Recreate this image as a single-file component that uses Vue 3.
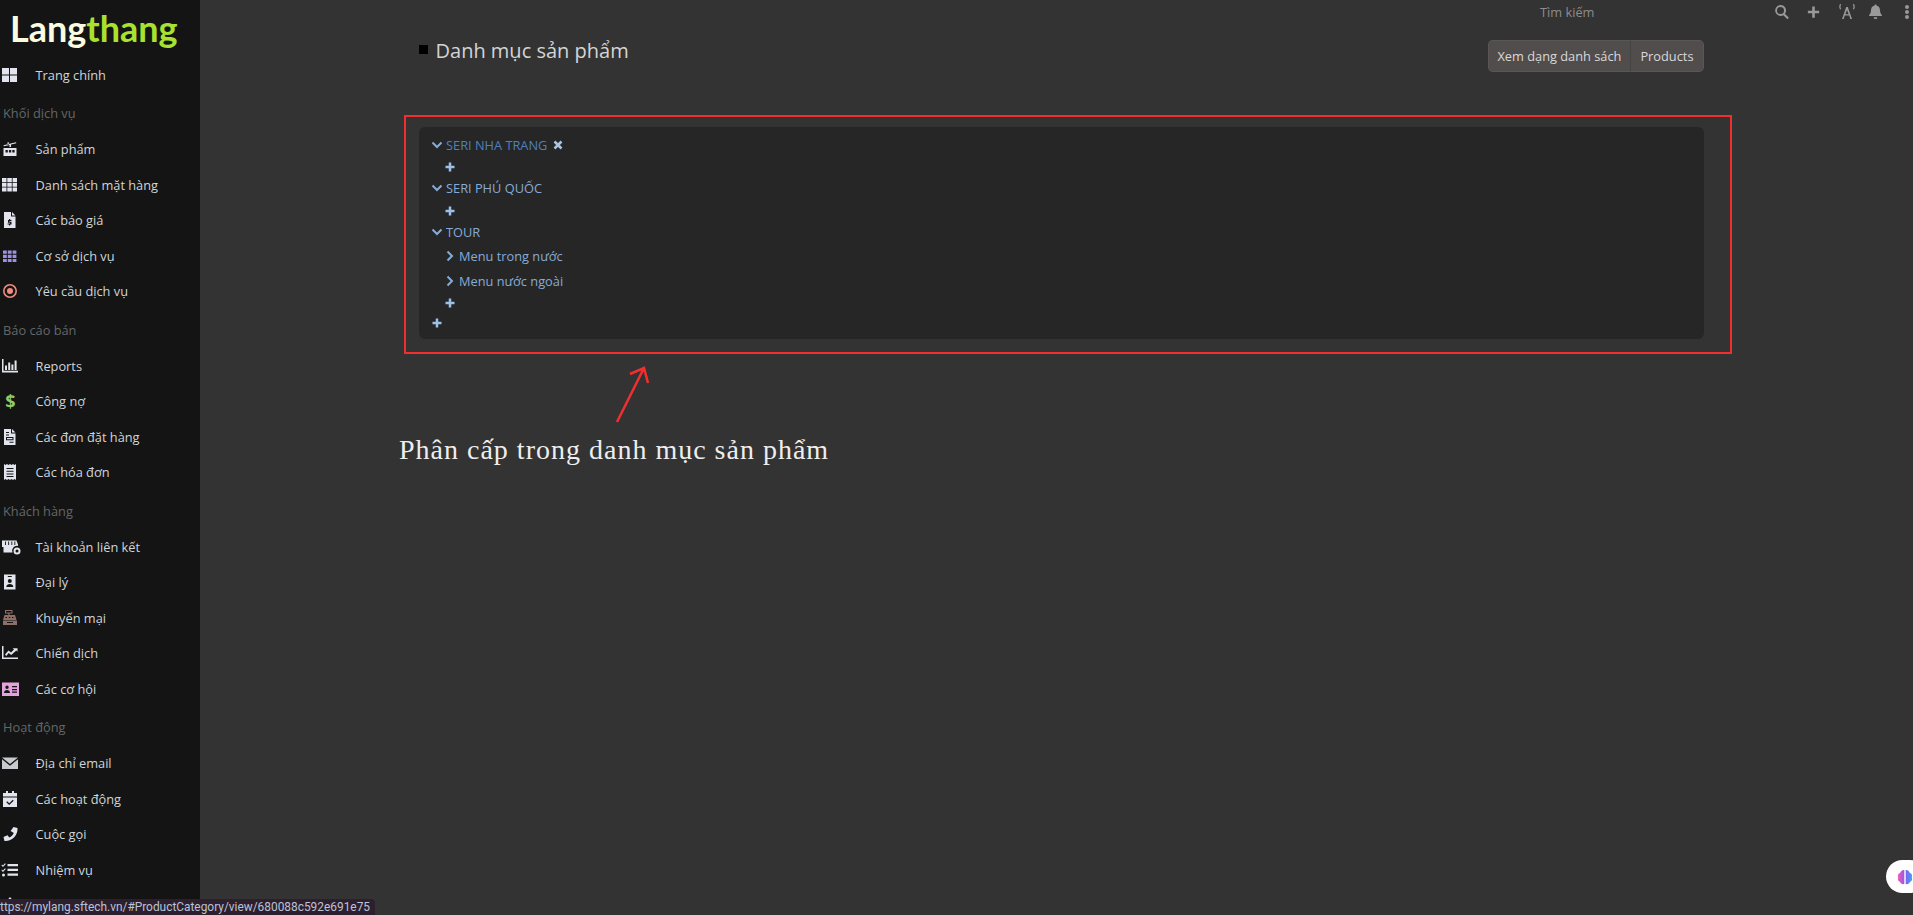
<script setup>
const icons = {
  home: 'M0 1h7v6.500H0zM8 1h7v6.500H8zM0 8.500h7V15H0zM8 8.500h7V15H8z',
  cable: 'M1.500 7h13v8h-13zM3.500 9v2.500h2.300V9zM6.900 9v2.500h2.300V9zM10.300 9v2.500h2.300V9zM1.500 4.200l12.500-3 .3 1-5.300 1.300V6H7.500V3.900L1.800 5.200zM5.500 1.200h1.300v2.500H5.500z',
  grid: 'M0 1h4.500v4H0zM5.300 1h4.500v4H5.300zM10.600 1H15v4h-4.400zM0 5.800h4.500v4H0zM5.300 5.800h4.500v4H5.300zM10.600 5.800H15v4h-4.400zM0 10.600h4.500v4H0zM5.300 10.600h4.500v4H5.300zM10.600 10.600H15v4h-4.400z',
  quote: 'M2 0h7v4.500h4.500V16H2zM10 0l3.500 3.500H10zM7 7h1.200v1H9.500v1H7.500v.8h2V12.500H8.200v1H7v-1H5.500v-1h2.500v-.8H6V8h1z',
  small: 'M1 2.500h3.800v3.200H1zM5.800 2.500h3.800v3.200H5.800zM10.600 2.500h3.800v3.200h-3.800zM1 6.700h3.800v3.200H1zM5.800 6.700h3.800v3.200H5.800zM10.600 6.700h3.800v3.200h-3.800zM1 10.900h3.800v3.200H1zM5.800 10.900h3.800v3.200H5.800zM10.600 10.900h3.800v3.200h-3.800z',
  target: 'M8 1a7 7 0 1 1 0 14A7 7 0 0 1 8 1zM8 2.600a5.400 5.400 0 1 0 0 10.800A5.400 5.400 0 0 0 8 2.600zM8 5a3 3 0 1 1 0 6 3 3 0 0 1 0-6z',
  bars: 'M0 1h1.500v11.700H16v1.800H0zM3 7.500h2v4.500H3zM6.200 4.500h2V12h-2zM9.400 6.500h2V12h-2zM12.600 2.500h2V12h-2z',
  order: 'M2 0h7v4.500h4.500V16H2zM10 0l3.500 3.500H10zM4 3h3v1H4zM4 5.500h3v1H4zM4 8h7.500v3.200H4zM5 9v1.200h5.500V9zM7.500 12.700h4v1h-4z',
  receipt: 'M2 0l1.500 1L5 0l1.500 1L8 0l1.500 1L11 0l1.500 1L14 0v16l-1.500-1-1.500 1-1.500-1L8 16l-1.500-1L5 16l-1.500-1L2 16zM4.500 4v1h7V4zM4.500 6.700v1h7v-1zM4.500 9.400v1h7v-1zM4.500 12v1h7v-1z',
  store: 'M0 1.500h14.500l1.500 4v1.500a4.800 4.800 0 0 0-5.500 6.500H1.500V8H0zM3 2.500v3.500h.9V2.500zM6.200 2.500v3.500h.9V2.500zM9.400 2.500v3.500h.9V2.500zM12.400 2.500v3.500h.9V2.500zM15 8.500a3.500 3.500 0 1 1 0 7 3.500 3.500 0 0 1 0-7zM15 10.500a1.500 1.500 0 1 0 0 3 1.500 1.500 0 0 0 0-3z',
  badge: 'M2 .5h11.500v15H2zM5.800 2v1h4V2zM7.800 5a2 2 0 1 1 0 4 2 2 0 0 1 0-4zM4.300 13c0-2 1.500-3 3.500-3s3.500 1 3.500 3z',
  register: 'M3 0h7.500v3.500H3zM4 1v1.500h5.500V1zM6.300 3.500h1.200V5H6.300zM2.500 5h10.500l1.500 5h-13.500zM1 10.500h14V15H1zM3.500 7v1h1.500V7zM6.800 7v1h1.500V7zM10 7v1h1.500V7zM5 12v1h6v-1z',
  line: 'M0 1h1.500v11.500H16V14H0zM3 9.500l3.500-4 2.500 2 3-3-1.300-1.300H15.500v3.500L14.300 5.500 9.200 10 6.700 8l-2.500 3z',
  card: 'M0 1.500h17V15H0zM5 4.500a1.700 1.700 0 1 0 0 3.400 1.700 1.700 0 0 0 0-3.400zM2 12c0-2 1.300-3 3-3s3 1 3 3zM10 5v1.200h5V5zM10 8v1.200h5V8zM10 10.500v1.200h5v-1.200z',
  mail: 'M0 2.500h16L8 9zM0 4.300l8 6.400 8-6.400V14H0z',
  calendar: 'M4 0h2v2h4V0h2v2h3v3.500H1V2h3zM1 6.500h14V16H1zM10.800 8.800L7.200 12.300 5.200 10.300l-.9.9 2.900 2.900 4.500-4.400z',
  phone: 'M11.500 1l4 1c.5 7.500-5.500 13.500-13 13l-1-4 4-1.800 1.800 2.200c2-1 3.500-2.500 4.500-4.500L8.600 5z',
  tasks: 'M0 2.500l1 1 2-2.200.8.8L1 5-.5 3.500zM5.500 2H16v2.200H5.500zM0 7.500l1 1 2-2.200.8.8L1 10-.5 8.500zM5.500 6.700H16v2.200H5.500zM1.500 11.500a1.500 1.500 0 1 1 0 3 1.500 1.500 0 0 1 0-3zM5.500 11.500H16v2.200H5.500z',
  up: 'M8 0l5 6H3z'
}

const nav = [
  { label: 'Trang chính', icon: 'home' },
  { group: 'Khối dịch vụ' },
  { label: 'Sản phẩm', icon: 'cable' },
  { label: 'Danh sách mặt hàng', icon: 'grid' },
  { label: 'Các báo giá', icon: 'quote' },
  { label: 'Cơ sở dịch vụ', icon: 'small', tone: 'purple' },
  { label: 'Yêu cầu dịch vụ', icon: 'target', tone: 'coral' },
  { group: 'Báo cáo bán' },
  { label: 'Reports', icon: 'bars' },
  { label: 'Công nợ', glyph: '$' },
  { label: 'Các đơn đặt hàng', icon: 'order' },
  { label: 'Các hóa đơn', icon: 'receipt' },
  { group: 'Khách hàng' },
  { label: 'Tài khoản liên kết', icon: 'store' },
  { label: 'Đại lý', icon: 'badge' },
  { label: 'Khuyến mại', icon: 'register', tone: 'brown' },
  { label: 'Chiến dịch', icon: 'line' },
  { label: 'Các cơ hội', icon: 'card', tone: 'pink' },
  { group: 'Hoạt động' },
  { label: 'Địa chỉ email', icon: 'mail', tone: 'grey' },
  { label: 'Các hoạt động', icon: 'calendar' },
  { label: 'Cuộc gọi', icon: 'phone' },
  { label: 'Nhiệm vụ', icon: 'tasks' },
  { label: '', icon: 'up' }
]
</script>

<template>
  <div class="page">
    <aside class="sidebar">
      <div class="logo"><span class="logo-a">Lang</span><span class="logo-b">thang</span></div>
      <nav class="nav">
        <template v-for="(item, i) in nav" :key="i">
          <div v-if="item.group" class="group">{{ item.group }}</div>
          <a v-else class="row">
            <span class="glyph" v-if="item.glyph">{{ item.glyph }}</span>
            <svg v-else class="ico" :class="item.tone" viewBox="0 0 17 16"><path fill-rule="evenodd" :d="icons[item.icon]" /></svg>
            <span>{{ item.label }}</span>
          </a>
        </template>
      </nav>
    </aside>

    <main class="main">
      <header class="top">
        <span class="search">Tìm kiếm</span>
        <div class="top-icons">
          <svg class="t-search" viewBox="0 0 16 16" width="16" height="16"><path fill-rule="evenodd" d="M6.500 1a5.500 5.500 0 0 1 4.400 8.800l4 4-1.500 1.500-4-4A5.500 5.500 0 1 1 6.500 1zM6.500 3a3.500 3.500 0 1 0 0 7 3.500 3.500 0 0 0 0-7z" /></svg>
          <svg class="t-plus" viewBox="0 0 16 16" width="15" height="16"><path d="M6.600 2h2.800v4.600H14v2.800H9.400V14H6.600V9.400H2V6.600h4.600z" /></svg>
          <svg class="t-ant" viewBox="0 0 20 16" width="20" height="16"><path fill-rule="evenodd" d="M9.200 3h1.600L15 15h-1.700l-1.100-3.400H7.800L6.700 15H5zM10 6l-1.600 4.200h3.200zM3 0l1.200.3c-.9 1.400-.9 3.400 0 4.800L3 5.400C2 3.800 2 1.600 3 0zM17 0c1 1.600 1 3.800 0 5.400l-1.200-.3c.9-1.400.9-3.400 0-4.800z" /></svg>
          <svg class="t-bell" viewBox="0 0 16 16" width="15" height="16"><path d="M8 0a1.300 1.300 0 0 1 1.300 1.300c2.300.5 3.500 2.400 3.500 4.800 0 3.200 1.500 4.400 2 5.200v1H1.200v-1c.5-.8 2-2 2-5.200 0-2.400 1.200-4.300 3.500-4.800A1.300 1.300 0 0 1 8 0zM6 13.500h4a2 2 0 0 1-4 0z" /></svg>
          <svg class="t-dots" viewBox="0 0 6 16" width="6" height="16"><path d="M3 1a2 2 0 1 1 0 4 2 2 0 0 1 0-4zM3 6a2 2 0 1 1 0 4 2 2 0 0 1 0-4zM3 11a2 2 0 1 1 0 4 2 2 0 0 1 0-4z" /></svg>
        </div>
      </header>

      <section class="content">
        <div class="head">
          <div class="title"><i class="bullet"></i><h1>Danh mục sản phẩm</h1></div>
          <div class="btns">
            <button class="btn">Xem dạng danh sách</button>
            <button class="btn">Products</button>
          </div>
        </div>

        <div class="tree">
          <div class="cat"><svg class="chev" viewBox="0 0 12 12"><path d="M1.500 3.500L6 8l4.500-4.500" /></svg><span class="active">SERI NHA TRANG</span><svg class="close" viewBox="0 0 12 12"><path d="M2.500 2.500l7 7M9.500 2.500l-7 7" /></svg></div>
          <div class="add nested"><svg class="plus" viewBox="0 0 12 12"><path d="M6 1.500v9M1.500 6h9" /></svg></div>
          <div class="cat"><svg class="chev" viewBox="0 0 12 12"><path d="M1.500 3.500L6 8l4.500-4.500" /></svg><span>SERI PHÚ QUỐC</span></div>
          <div class="add nested tall"><svg class="plus" viewBox="0 0 12 12"><path d="M6 1.500v9M1.500 6h9" /></svg></div>
          <div class="cat"><svg class="chev" viewBox="0 0 12 12"><path d="M1.500 3.500L6 8l4.500-4.500" /></svg><span>TOUR</span></div>
          <div class="sub nested"><svg class="chev" viewBox="0 0 12 12"><path d="M3.500 1.500L8 6l-4.500 4.500" /></svg><span>Menu trong nước</span></div>
          <div class="sub nested"><svg class="chev" viewBox="0 0 12 12"><path d="M3.500 1.500L8 6l-4.500 4.500" /></svg><span>Menu nước ngoài</span></div>
          <div class="add nested short"><svg class="plus" viewBox="0 0 12 12"><path d="M6 1.500v9M1.500 6h9" /></svg></div>
          <div class="add root"><svg class="plus" viewBox="0 0 12 12"><path d="M6 1.500v9M1.500 6h9" /></svg></div>
        </div>

        <div class="callout"></div>
        <svg class="arrow" viewBox="0 0 44 60" width="44" height="60"><path d="M7 57L34 3M20 9l14-6 4 15" /></svg>
        <p class="note">Phân cấp trong danh mục sản phẩm</p>
      </section>
    </main>

    <div class="status">ttps://mylang.sftech.vn/#ProductCategory/view/680088c592e691e75</div>
    <div class="fab">
      <svg viewBox="0 0 20 20" width="20" height="20">
        <defs><linearGradient id="brain" x1="0" x2="1" y1="0" y2="0"><stop offset="0" stop-color="#f45ab0" /><stop offset=".5" stop-color="#8a5cf0" /><stop offset="1" stop-color="#3aa4f5" /></linearGradient></defs>
        <path fill="url(#brain)" d="M9.300 3v14c-2.200.6-3.800-.6-4.200-2-1.900-.4-2.800-2.800-1.900-4.500-1-1.900.1-4 1.900-4.400C5.500 4.500 7.300 2.500 9.300 3zM10.700 3c2-.5 3.800 1.500 4.200 3.100 1.800.4 2.900 2.500 1.900 4.400.9 1.700 0 4.100-1.900 4.500-.4 1.400-2 2.600-4.200 2z" />
      </svg>
    </div>
  </div>
</template>

<style scoped>
.page { display: flex; width: 1913px; height: 915px; overflow: hidden; background: #333; color: #ddd; font-family: "Open Sans", sans-serif; font-size: 12.800px; position: relative; }
.sidebar { width: 200px; flex: none; background: #141414; overflow: hidden; }
.logo { height: 57px; padding: 3px 0 0 10px; box-sizing: border-box; font-family: "Lato", sans-serif; font-weight: 700; font-size: 36px; line-height: 50px; }
.logo-a { color: #fbfbe0; }
.logo-b { color: #a8e22f; }
.nav { display: flex; flex-direction: column; }
.row { height: 35.500px; display: flex; align-items: center; gap: 16.500px; padding-left: 2px; color: #d0d5da; white-space: nowrap; flex: none; }
.group { height: 39px; display: flex; align-items: center; padding-left: 3px; color: #666; flex: none; padding-top: 2px; box-sizing: border-box; }
.ico { width: 17px; height: 16px; fill: #e2e5ee; flex: none; overflow: visible; }
.ico.purple { fill: #9c90e6; }
.ico.coral { fill: #ef8b7f; }
.ico.brown { fill: #8d6f68; }
.ico.pink { fill: #e3a3dc; }
.ico.grey { fill: #c9cad0; }
.glyph { width: 17px; flex: none; text-align: center; color: #8fca6b; font-weight: 700; font-size: 18px; }

.main { flex: 1; min-width: 0; display: flex; flex-direction: column; }
.top { height: 25px; flex: none; display: flex; align-items: center; padding-left: 1340px; }
.search { width: 234px; color: #8c8c8c; flex: none; white-space: nowrap; margin-top: -1px; }
.top-icons { display: flex; align-items: center; margin-top: -2px; }
.top-icons svg { fill: #999; display: block; flex: none; }
.t-plus { margin-left: 16px; }
.t-ant { margin-left: 16px; }
.t-bell { margin-left: 11px; }
.t-dots { margin-left: 21px; }
.content { position: relative; flex: 1; padding: 0 209px 0 219px; }
.head { display: flex; justify-content: space-between; height: 102px; }
.title { display: flex; align-items: flex-start; gap: 7.500px; padding-top: 12px; }
.bullet { width: 9px; height: 9px; background: #000; margin-top: 8px; }
h1 { margin: 0; font-size: 20px; font-weight: 400; line-height: 27px; color: #d4d4d4; }
.btns { display: flex; align-self: flex-start; margin-top: 15px; }
.btn { height: 32px; padding: 0 8.500px; background: #524d4d; border: 1px solid #5c5757; color: #d8d8d8; font: 12.800px "Open Sans", sans-serif; }
.btn:first-child { border-radius: 5px 0 0 5px; border-right-color: #444; }
.btn:last-child { border-radius: 0 5px 5px 0; border-left: 0; padding: 0 9.500px; }
.tree { background: #262626; border-radius: 6px; height: 212px; box-sizing: border-box; padding: 7px 12px 0; color: #86abd6; }
.cat, .sub, .add { display: flex; align-items: center; white-space: nowrap; }
.cat { height: 22px; }
.cat:nth-child(n+2) { margin-top: -1px; }
.add { height: 22px; }
.tall { height: 23px; }
.sub { height: 25px; }
.short { height: 20px; }
.root { height: 20px; }
.nested { padding-left: 13px; }
.chev { width: 12px; height: 12px; margin-right: 3px; fill: none; stroke: #86abd6; stroke-width: 2; flex: none; }
.active { color: #4f80bd; }
.close { width: 12px; height: 12px; margin-left: 5px; fill: none; stroke: #a9c5e4; stroke-width: 2.500; }
.plus { width: 12px; height: 12px; fill: none; stroke: #9cc0e8; stroke-width: 2.500; }
.callout { position: absolute; left: 204px; top: 90px; width: 1324px; height: 235px; border: 2px solid #f22f2f; pointer-events: none; }
.arrow { position: absolute; left: 410px; top: 340px; fill: none; stroke: #f22f2f; stroke-width: 2.500; }
.note { position: absolute; left: 199px; top: 408px; margin: 0; font-family: "Liberation Serif", serif; font-size: 28px; line-height: 34px; color: #eee; white-space: nowrap; letter-spacing: 1px; }

.status { position: absolute; left: 0; bottom: 0; width: 375px; height: 16px; background: #2d1f2e; border-top-right-radius: 4px; color: #b9c4d4; font-family: "Roboto", sans-serif; font-size: 11.900px; line-height: 17px; white-space: nowrap; overflow: hidden; }
.fab { position: absolute; left: 1886px; top: 860px; width: 40px; height: 33px; border-radius: 17px; background: #fff; display: flex; align-items: center; padding-left: 9px; box-sizing: border-box; }
</style>
